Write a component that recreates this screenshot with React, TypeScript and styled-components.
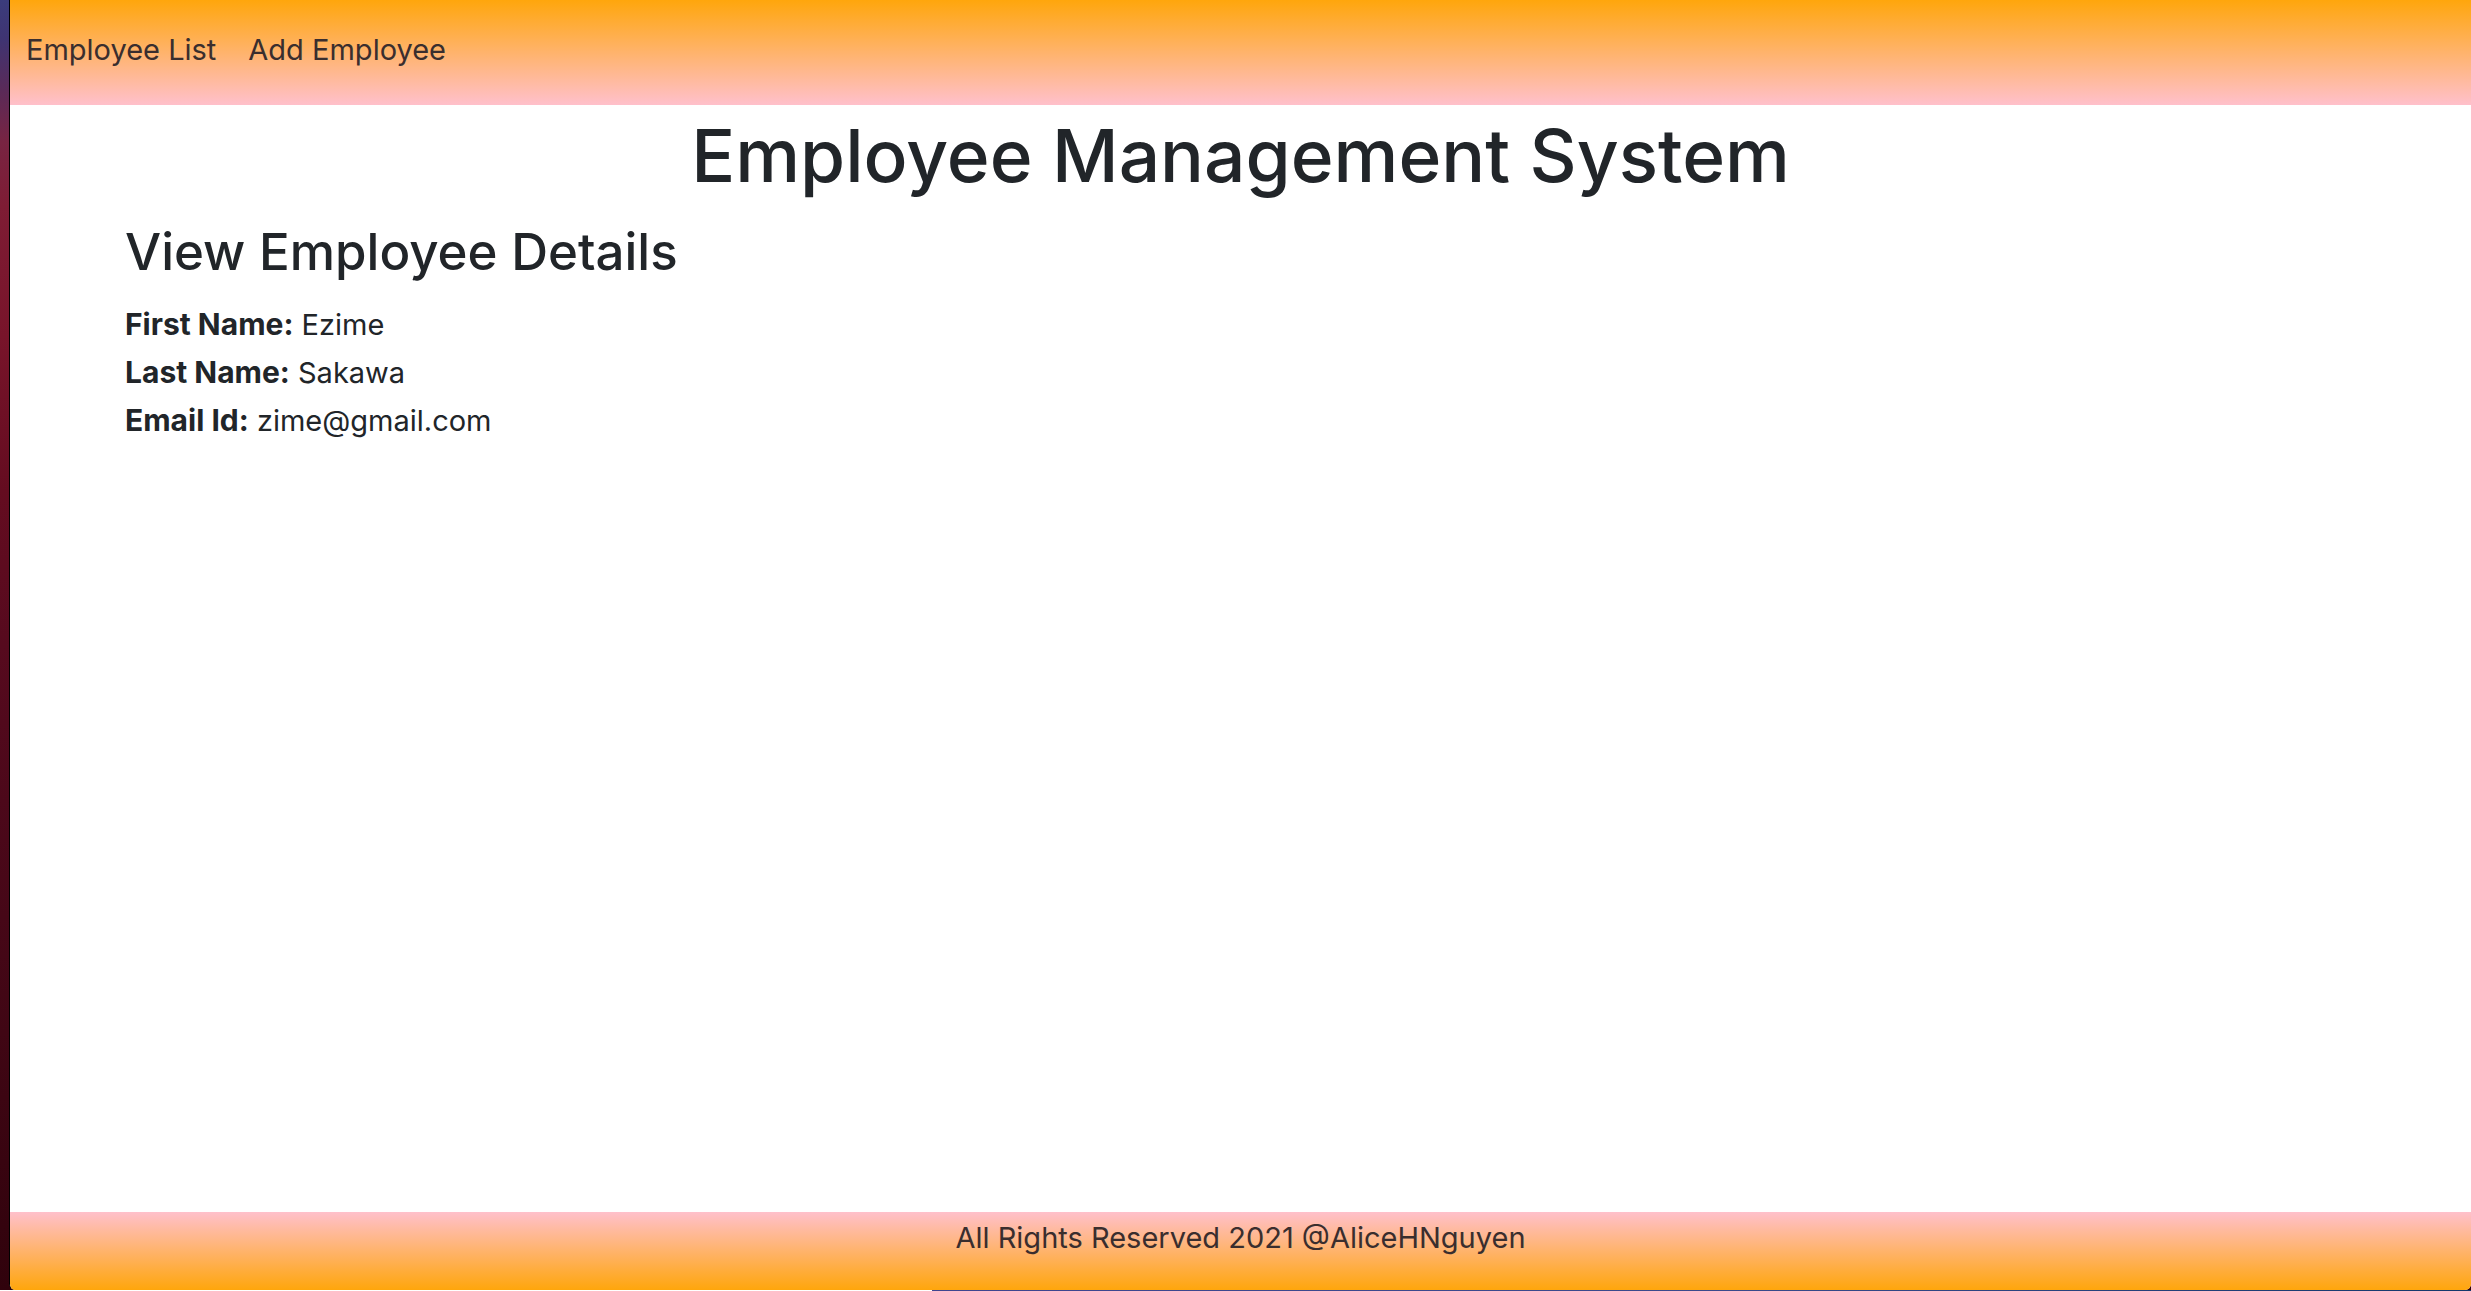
import React from "react";
import styled, { createGlobalStyle } from "styled-components";

const GlobalStyle = createGlobalStyle`
  *, *::before, *::after { box-sizing: border-box; }
  body {
    margin: 0;
    color: #212529;
    font-family: Inter, "Liberation Sans", sans-serif;
    font-size: 29px;
    line-height: 48px;
  }
`;

const Desktop = styled.div`
  display: flex;
  flex-direction: column;
  min-height: 100vh;
  padding-left: 9px;
  background: linear-gradient(
    #3b3c7c 0%, #3f3472 3%, #5a2a58 7%, #782442 11%, #7e1c34 16%, #78142a 26%,
    #640c20 38%, #560a1e 50%, #4c081a 62%, #400614 80%, #30020c 100%
  );
`;

const Window = styled.div`
  display: flex;
  flex: 1;
  flex-direction: column;
  overflow: hidden;
  border-left: 1px solid #000;
  border-radius: 0 0 6px 6px;
  background: #fff;
`;

const DesktopEdge = styled.div`
  height: 1px;
  margin-left: -9px;
  background: linear-gradient(90deg, #fff 932px, #3f4590 932px, #3a4a8c 70%, #14386c);
`;

const Navbar = styled.nav`
  display: flex;
  gap: 32px;
  height: 105px;
  padding: 26px 16px;
  background: linear-gradient(#ffa60c, #ffc0cb);
`;

const NavLink = styled.a`
  color: #3a2e2e;
  text-decoration: none;
`;

const Main = styled.main`
  flex: 1;
`;

const Title = styled.h1`
  margin: 0 0 12px;
  font-size: 73px;
  font-weight: 500;
  line-height: 102px;
  text-align: center;
`;

const Details = styled.section`
  padding: 0 115px;
`;

const Subtitle = styled.h3`
  margin: 0 0 16px;
  font-size: 51px;
  font-weight: 500;
  line-height: 66px;
`;

const Field = styled.div``;

const FieldName = styled.strong`
  font-size: 30px;
  font-weight: 700;
  line-height: 40px;
`;

const Footer = styled.footer`
  height: 78px;
  padding-top: 2px;
  color: #3a2e2e;
  text-align: center;
  background: linear-gradient(#ffc0cb, #ffa60c);
`;

const fields = [
  { name: "First Name:", value: "Ezime" },
  { name: "Last Name:", value: "Sakawa" },
  { name: "Email Id:", value: "zime@gmail.com" },
];

export default function App() {
  return (
    <Desktop>
      <GlobalStyle />
      <Window>
        <Navbar>
          <NavLink href="#employees">Employee List</NavLink>
          <NavLink href="#add">Add Employee</NavLink>
        </Navbar>
        <Main>
          <Title>Employee Management System</Title>
          <Details>
            <Subtitle>View Employee Details</Subtitle>
            {fields.map((field) => (
              <Field key={field.name}>
                <FieldName>{field.name}</FieldName> {field.value}
              </Field>
            ))}
          </Details>
        </Main>
        <Footer>All Rights Reserved 2021 @AliceHNguyen</Footer>
      </Window>
      <DesktopEdge />
    </Desktop>
  );
}
